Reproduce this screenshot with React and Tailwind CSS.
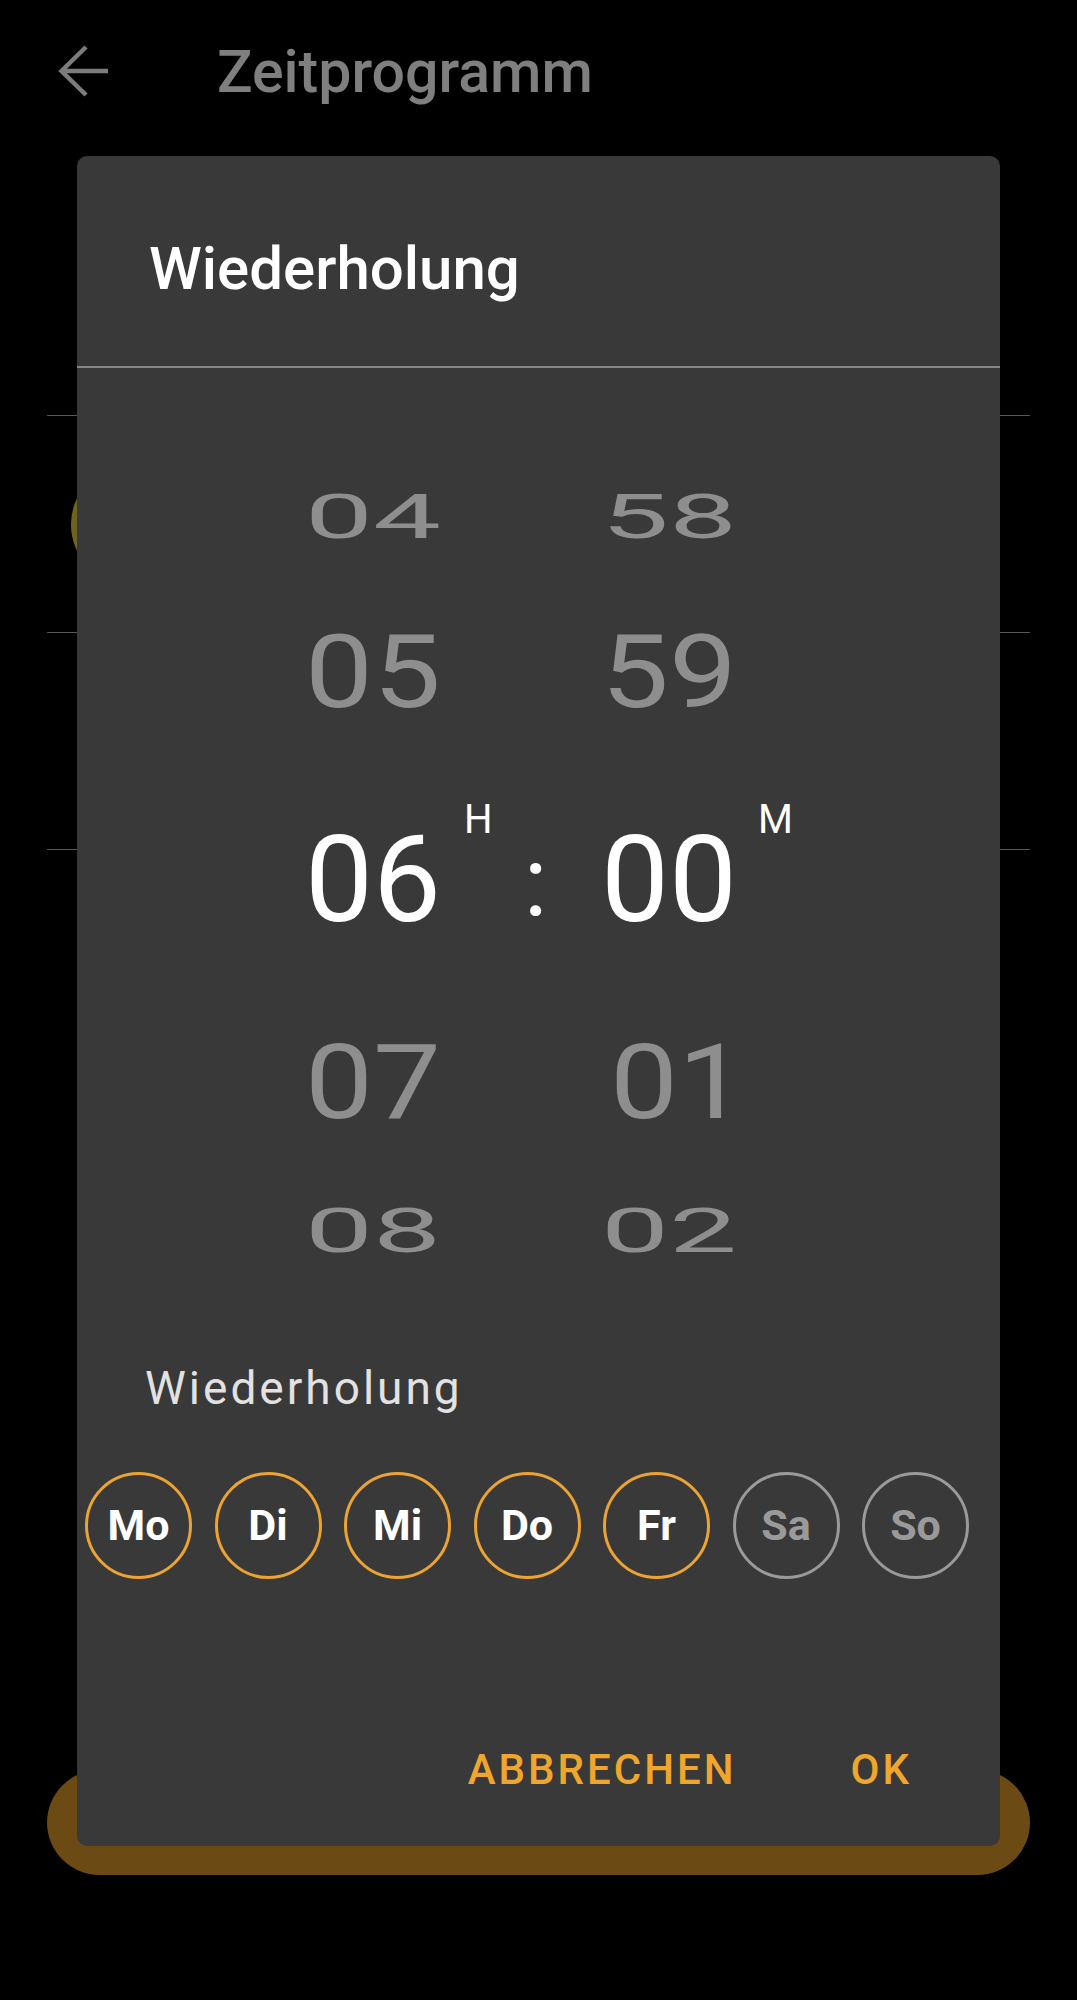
import React from "react";

function PickerRow({ h, m, height, scale, mShift = "" }) {
  return (
    <div className={`flex items-center pl-[216px] ${height}`}>
      <span className={`w-[160px] text-center text-[121px] leading-none text-[#8e8e8e] ${scale}`}>{h}</span>
      <div className="w-[136px]" />
      <span className={`w-[160px] text-center text-[121px] leading-none text-[#8e8e8e] ${scale} ${mShift}`}>{m}</span>
    </div>
  );
}

const days = [
  { d: "Mo", on: true },
  { d: "Di", on: true },
  { d: "Mi", on: true },
  { d: "Do", on: true },
  { d: "Fr", on: true },
  { d: "Sa", on: false },
  { d: "So", on: false },
];

export default function App() {
  return (
    <div className="relative w-[1077px] h-[2000px] bg-black overflow-hidden font-[Roboto,sans-serif]">
      {/* underlying page */}
      <header className="flex items-center h-[142px]">
        <svg className="ml-[58px] shrink-0" width="52" height="52" viewBox="0 0 52 52" fill="none">
          <path d="M50 26H4M28 2L3.5 26L28 50" stroke="#7c7c7c" strokeWidth="4.5" strokeLinejoin="miter" />
        </svg>
        <h1 className="ml-[107px] text-[59px] leading-none font-medium text-[#7f7f7f]">Zeitprogramm</h1>
      </header>
      <div className="mx-[47px] mt-[273px]">
        <div className="h-[217px] border-t border-[#555555] flex items-center">
          <div className="ml-[24px] w-[123px] h-[123px] rounded-full bg-[#6e6220]" />
        </div>
        <div className="h-[217px] border-t border-[#555555]" />
        <div className="border-t border-[#555555]" />
      </div>
      <div className="mx-[47px] mt-[920px] h-[105px] rounded-full bg-[#6c4a14]" />

      {/* dialog */}
      <div className="absolute left-[77px] top-[156px] w-[923px] h-[1690px] rounded-[10px] bg-[#393939] flex flex-col">
        <div className="h-[210px] pt-[83px] pl-[72px]">
          <h2 className="text-[60px] leading-none font-medium text-white">Wiederholung</h2>
        </div>
        <div className="h-[2px] bg-[#858585]" />
        <div className="pt-[79px]">
          <PickerRow h="04" m="58" height="h-[140px]" scale="scale-y-[0.5]" />
          <PickerRow h="05" m="59" height="h-[170px]" scale="scale-y-[0.85]" />
          <div className="flex items-center h-[246px] pl-[216px]">
            <span className="w-[160px] text-center text-[121px] leading-none text-white">06</span>
            <div className="w-[136px] h-full flex">
              <div className="w-[60px] pt-[43px] pl-[11px]">
                <span className="block text-[40px] leading-none text-white">H</span>
              </div>
              <div className="w-[45px] flex items-center justify-center">
                <span className="text-[98px] leading-none text-white mt-[4px]">:</span>
              </div>
            </div>
            <span className="w-[160px] text-center text-[121px] leading-none text-white">00</span>
            <div className="h-full pt-[43px] pl-[9px]">
              <span className="block text-[40px] leading-none text-white">M</span>
            </div>
          </div>
          <PickerRow h="07" m="01" height="h-[160px]" scale="scale-y-[0.86]" mShift="translate-x-[9px]" />
          <PickerRow h="08" m="02" height="h-[136px]" scale="scale-y-[0.5]" />
        </div>
        <div className="mt-[66px] pl-[68px]">
          <span className="text-[46px] leading-none tracking-[3px] text-[#e2e2e2]">Wiederholung</span>
        </div>
        <div className="mt-[61px] pl-[8px] flex gap-[22.5px]">
          {days.map((x) => (
            <div
              key={x.d}
              className={`w-[107px] h-[107px] rounded-full border-[3px] flex items-center justify-center text-[43px] font-bold leading-none ${
                x.on ? "border-[#eba434] text-white" : "border-[#9a9a9a] text-[#9a9a9a]"
              }`}
            >
              {x.d}
            </div>
          ))}
        </div>
        <div className="mt-[170px] flex justify-end items-center pr-[88px] gap-[114px]">
          <span className="text-[42px] leading-none font-medium tracking-[3px] text-[#f0a62c]">ABBRECHEN</span>
          <span className="text-[42px] leading-none font-medium tracking-[3px] text-[#f0a62c]">OK</span>
        </div>
      </div>
    </div>
  );
}
